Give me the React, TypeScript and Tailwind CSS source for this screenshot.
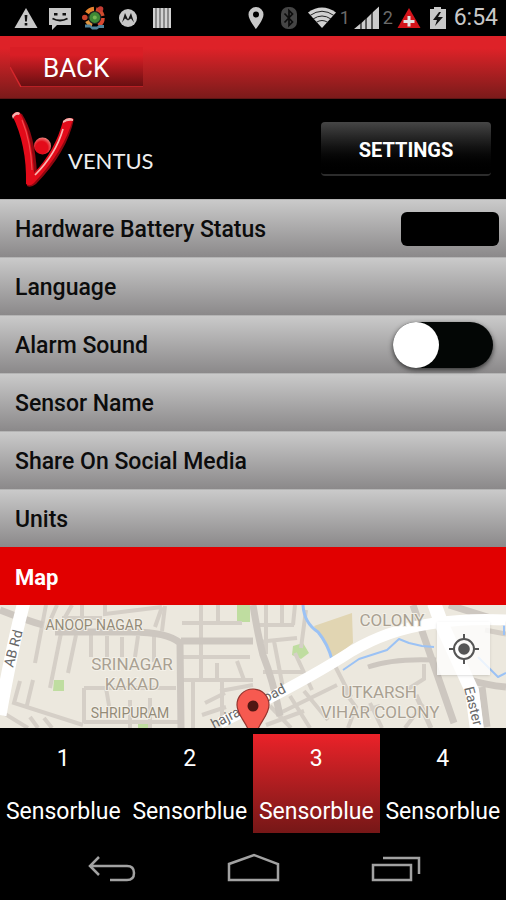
import React, { useState } from 'react';
import clsx from 'clsx';

const sensors = [
  { id: 1, name: 'Sensorblue' },
  { id: 2, name: 'Sensorblue' },
  { id: 3, name: 'Sensorblue' },
  { id: 4, name: 'Sensorblue' },
];

const rowClass =
  'flex h-[58px] w-full items-center justify-between border-t border-[#b4b4b4] bg-linear-to-b from-[#cacaca] to-[#8b898a] pr-[7px] pl-[15px] text-left text-[23px] font-medium text-[#0c0c0c]';

function StatusBar() {
  return (
    <div className="flex h-9 items-center justify-between bg-black pr-2 pl-[14px] text-[#c8c8c8]">
      <div className="flex items-center gap-[10px]">
        <svg className="h-6 w-6" viewBox="0 0 24 24">
          <path d="M12 2 23.5 22H.5Z" fill="#c8c8c8" />
          <path d="M10.600 9h2.800l-.5 6.500h-1.800zM10.700 17h2.600v2.600h-2.600z" fill="#111" />
        </svg>
        <svg className="h-6 w-6" viewBox="0 0 24 24">
          <path d="M1 2h22v17H9l-5 5v-5H1z" fill="#c8c8c8" />
          <path d="M6 7h3.500v2.500H6zM14.500 7H18v2.500h-3.500z" fill="#111" />
          <path d="M4.500 12.500q7.500 4 15 0" fill="none" stroke="#111" strokeWidth="1.800" />
        </svg>
        <svg className="h-6 w-6" viewBox="0 0 24 24">
          <path d="M5 7A9 9 0 0 1 12 3" fill="none" stroke="#e5822e" strokeWidth="4.500" />
          <path d="M14 3.500a9 9 0 0 1 6.500 6.500" fill="none" stroke="#cf4a2d" strokeWidth="4.500" />
          <path d="M20.500 12a9 9 0 0 1-4 7.500" fill="none" stroke="#d9472f" strokeWidth="4.500" />
          <path d="M5 15a9 9 0 0 0 5 4.500" fill="none" stroke="#df9640" strokeWidth="4" />
          <circle cx="2.800" cy="11.500" r="2.800" fill="#c8442c" />
          <circle cx="18.500" cy="3" r="2.800" fill="#c43c33" />
          <circle cx="12.800" cy="11.500" r="6" fill="#3f8a35" stroke="#222" strokeWidth="1.200" />
          <circle cx="12.800" cy="11.500" r="2" fill="#79b654" />
          <path d="M3 18.500h5l2 2h5l2-1.500h5v3h-5l-2 1.500h-5l-2-2H3z" fill="#52849b" />
        </svg>
        <svg className="h-6 w-6" viewBox="0 0 24 24">
          <circle cx="12" cy="12" r="9" fill="#c8c8c8" />
          <path d="M6 16.500 9 7l3 6.500L15 7l3 9.500-3-4-3 2-3-2z" fill="#161616" />
        </svg>
        <svg className="h-6 w-6" viewBox="0 0 24 24">
          <path d="M3 2h18v20H3z" fill="#a0a0a0" />
          <path d="M4 2v20M8 2v20M12 2v20M16 2v20M20 2v20" stroke="#d2d2d2" strokeWidth="2" />
          <path d="M6 2v20M10 2v20M14 2v20M18 2v20" stroke="#777" strokeWidth="1" />
        </svg>
      </div>

      <div className="flex items-center">
        <svg className="mr-4 h-6 w-4" viewBox="0 0 16 24">
          <path
            d="M8 1a7.500 7.500 0 0 1 7.500 7.500C15.500 14 8 23 8 23S.5 14 .5 8.500A7.500 7.500 0 0 1 8 1Zm0 4.500a3 3 0 1 0 0 6 3 3 0 0 0 0-6Z"
            fill="#c8c8c8"
            fillRule="evenodd"
          />
        </svg>
        <svg className="mr-[10px] h-6 w-[18px]" viewBox="0 0 18 24">
          <rect x="1" y="1" width="16" height="22" rx="7" fill="#454545" />
          <path d="m4.500 7.500 8 8.500L9 19.500v-15L12.500 8l-8 8.500" fill="none" stroke="#0c0c0c" strokeWidth="1.700" />
        </svg>
        <svg className="mr-1 h-6 w-7" viewBox="0 0 28 24">
          <path d="M0 6.500Q14-3.500 28 6.500L14 22Z" fill="#d0d0d0" />
          <path d="M2 9.500Q14 1 26 9.500M5 13q9-6 18 0M8 16.500q6-4 12 0" fill="none" stroke="#222" strokeWidth="1" />
        </svg>
        <span className="w-[14px] text-lg text-[#6a6a6a]">1</span>
        <svg className="mr-1 h-6 w-[25px]" viewBox="0 0 25 24">
          <path d="M0 23 6 18v5zM7.500 17l4-4v10h-4zM13 12l4-4v15h-4zM19 6l6-5.500V23h-6z" fill="#cbcbcb" />
          <path d="m6 18 1.500-1v6H6zM11.500 13l1.500-1v11h-1.500zM17 8l2-2v17h-2z" fill="#555" />
        </svg>
        <span className="w-[14px] text-lg text-[#6a6a6a]">2</span>
        <svg className="mr-2 h-6 w-6" viewBox="0 0 24 24">
          <path d="M12 2 23.500 22H.5Z" fill="#d3131a" />
          <path d="M10.500 10h3v4h4v3h-4v3.500h-3V17h-4v-3h4z" fill="#e2e2e2" />
        </svg>
        <svg className="mr-[7px] h-6 w-[18px]" viewBox="0 0 18 24">
          <path d="M5 1h7v2h5v20H1V3h4z" fill="#c8c8c8" />
          <path d="m10 6-6 8h4l-2 6 8-9H9l3-5z" fill="#111" />
        </svg>
        <span className="text-[23px] leading-9">6:54</span>
      </div>
    </div>
  );
}

function VentusLogo() {
  return (
    <div className="flex items-end">
      <svg className="h-[80px] w-[76px]" viewBox="0 0 76 80" role="img" aria-label="Ventus logo">
        <defs>
          <radialGradient id="ball" cx="45%" cy="60%" r="60%">
            <stop offset="60%" stopColor="#e30b1a" />
            <stop offset="100%" stopColor="#ef7d78" />
          </radialGradient>
        </defs>
        <path d="M13 7Q18 3 22 5q13 20 15 60 20-20 29-54 4-3 8-1Q67 43 36 75q-5 4-9 2Q29 35 13 7Z" fill="#8f0710" />
        <path d="M12 6q4-5 8-2 12 22 14 60 21-22 29-52 5-5 10-2-9 32-39 64-4 4-8 1 1-39-14-69Z" fill="#e30b1a" />
        <path d="M12 7q4-6 8-3l-1 2q-4-1-6 4zM63 12q5-5 10-2v2q-5-1-10 2z" fill="#f4b4b0" />
        <path d="M35 66q21-21 28-46" fill="none" stroke="#f8b6b1" strokeWidth="1.700" />
        <path d="M22 11q9 22 10 50" fill="none" stroke="#f04a4d" strokeWidth="1.200" />
        <circle cx="42.500" cy="37" r="8.500" fill="url(#ball)" />
      </svg>
      <span className="-ml-2 pb-3 font-['Lato'] text-[22px] leading-8 text-[#eeeeee]">VENTUS</span>
    </div>
  );
}

function SensorMap() {
  return (
    <div className="relative h-[123px] overflow-hidden bg-[#ece8de]">
      <svg className="h-full w-full" viewBox="0 0 506 123" preserveAspectRatio="xMidYMid slice" fontFamily="Roboto, sans-serif">
        <rect width="506" height="123" fill="#ece8de" />
        {/* parks */}
        <path d="M237 0h13v17h-13zM54 75h10v11H53zM138 115h11v8h-11z" fill="#bfdda0" />
        <path d="m293 41 10-3 6 10-8 6-9-4z" fill="#bfdda0" />
        <path d="m314 21 38-13 1 30-20 16z" fill="#e1d5b2" />
        {/* side streets */}
        <g fill="none" stroke="#d5cfc7" strokeWidth="4">
          <path d="M46 0 35 58M61 28 50 83M76 30l-8 38M91 30v22M107 31v21M122 32v20M138 31l-3 21M154 31v26M46 25 57 0M72 0l-8 14M82 0v17M62 13h40M105 0v9l57-7M162 2l-7 20" />
          <path d="M165 1 162 26M182 18h60M201 0v74M182 52h68M180 75h73M218 0v18M217 58v17M237 56l7 19M222 75v45M220 86l33-6" />
          <path d="M20 76 14 98l69 22M33 75l-6 25M30 112l8 11M44 113l8 10M0 106l28 17M84 83h92M84 83v35M106 83l4 23M130 95v28M150 93v30M84 117h94M193 76v47M205 98l20-10M202 110l24-8" />
          <path d="M254 20h40M266 0v49M282 0v20M295 0l-2 20M257 37l40-4M274 36l9 47M295 48l17 37M263 67h40M306 5l-5 38M333 57l18 35M270 101l21 22M290 91l20 32M304 86l24 29M282 107l55-27M266 120l38-14" />
          <path d="m344 86 12 16-8 21M360 107l20-6M370 98l12 25M405 123l18-24M424 59v15l-16 10" />
        </g>
        {/* main grey roads */}
        <g fill="none" stroke="#cdc7c0" strokeWidth="7">
          <path d="M0 5q25 10 43 15M55 27h70q42-1 55 11l1 85M181 36h72M253 0q5 31 10 50 10 25 17 61" />
          <path d="M470 75q15 5 36 7M482 82l5 40M449 0l57 18M413 0l41 118" />
          <path d="M368 62q25-9 68-7" strokeWidth="5" />
        </g>
        <path d="M416 90l15 33M485 25l21 4" fill="none" stroke="#d3cdc5" strokeWidth="5" />
        {/* streams */}
        <g fill="none" stroke="#9bc2f5" strokeWidth="3" strokeLinejoin="round">
          <path d="M303 0q1 18 15 27 10 12 14 28" />
          <path d="m343 65 16-11 28-9 12-11 10 4 13 3 12 1" strokeWidth="2" />
          <path d="m478 52 12 12 8 8 8-4M504 20v10" strokeWidth="2" />
        </g>
        {/* highways */}
        <g fill="none" stroke="#ffffff">
          <path d="M24-3Q12 42 0 110" strokeWidth="13" />
          <path d="M220 118Q306 76 352 46 388 25 429 19 465 13 506 15" strokeWidth="11" />
          <path d="m434-2 8 22 30 66 5 39" strokeWidth="14" />
        </g>
        {/* labels */}
        <g fill="#938b78" stroke="#f3f0e8" strokeWidth="2" paintOrder="stroke" fontSize="14">
          <text x="94" y="25" textAnchor="middle">ANOOP NAGAR</text>
          <text x="130" y="113" textAnchor="middle">SHRIPURAM</text>
        </g>
        <g fill="#a9a092" stroke="#f3f0e8" strokeWidth="2" paintOrder="stroke" fontSize="17" textAnchor="middle">
          <text x="132" y="65">SRINAGAR</text>
          <text x="132" y="85">KAKAD</text>
          <text x="392" y="21">COLONY</text>
          <text x="379" y="93">UTKARSH</text>
          <text x="380" y="113">VIHAR COLONY</text>
        </g>
        <g fill="#686868" fontSize="14">
          <text transform="translate(13 63) rotate(-75)">AB Rd</text>
          <text transform="translate(214 124) rotate(-27)">hajrana Road</text>
          <text transform="translate(464 83) rotate(76)">Easter</text>
        </g>
        <path d="M253 84c9 0 16 7 16 16 0 10-10 18-12 27h-8c-2-9-12-17-12-27 0-9 7-16 16-16Z" fill="#f65a50" stroke="#94342e" strokeWidth="1.200" />
        <circle cx="253" cy="101" r="5.500" fill="#501713" />
      </svg>
      <button
        aria-label="My location"
        className="absolute top-[17px] right-4 flex h-[53px] w-[53px] items-center justify-center bg-white/80 shadow-sm"
      >
        <svg className="h-8 w-8" viewBox="0 0 32 32">
          <circle cx="16" cy="16" r="10" fill="none" stroke="#555" strokeWidth="2" />
          <circle cx="16" cy="16" r="5.800" fill="#555" />
          <path d="M16 1v6M16 25v6M1 16h6M25 16h6" stroke="#555" strokeWidth="2" />
        </svg>
      </button>
    </div>
  );
}

export default function App() {
  const [alarmOn, setAlarmOn] = useState(false);
  const [activeSensor, setActiveSensor] = useState(3);

  return (
    <div className="min-h-screen bg-black font-['Roboto',sans-serif] text-white">
      <StatusBar />

      <header className="flex h-[62px] items-center bg-linear-to-b from-[#de2228] from-20% to-[#7b1a1a] px-[10px]">
        <button className="relative h-10 w-[133px] text-left">
          <svg className="absolute inset-0 h-full w-full" viewBox="0 0 133 40" preserveAspectRatio="none">
            <defs>
              <linearGradient id="backFill" x1="0" y1="0" x2="0" y2="1">
                <stop offset="20%" stopColor="#d91e25" />
                <stop offset="100%" stopColor="#650e11" />
              </linearGradient>
            </defs>
            <path d="M0 0H133V40H11L0 20Z" fill="url(#backFill)" />
            <path d="M0 20 11 40H133" fill="none" stroke="#d5272c" strokeWidth="1.500" />
          </svg>
          <span className="relative pl-[33px] text-[26px] leading-[42px]">BACK</span>
        </button>
      </header>

      <div className="flex h-[101px] items-center justify-between border-t border-[#5c1515] pr-[15px]">
        <VentusLogo />
        <button className="h-[54px] w-[170px] rounded-sm border-b-2 border-[#2c2c2c] bg-linear-to-b from-[#464646] via-[#111111] via-50% to-black pt-[3px] text-xl font-bold">
          SETTINGS
        </button>
      </div>

      <main>
        <div className={rowClass}>
          <span className="pt-[3px]">Hardware Battery Status</span>
          <div className="h-[34px] w-[98px] rounded-md bg-black" />
        </div>
        <button className={rowClass}>
          <span className="pt-[3px]">Language</span>
        </button>
        <label className={rowClass}>
          <span className="pt-[3px]">Alarm Sound</span>
          <input
            type="checkbox"
            className="peer sr-only"
            checked={alarmOn}
            onChange={(e) => setAlarmOn(e.target.checked)}
          />
          <span
            className={clsx(
              'mr-[6px] flex h-[46px] w-[100px] rounded-full bg-[#030605] shadow-[0_2px_5px_#333]',
              alarmOn && 'justify-end'
            )}
          >
            <span className="h-[46px] w-[46px] rounded-full bg-white" />
          </span>
        </label>
        <button className={rowClass}>
          <span className="pt-[3px]">Sensor Name</span>
        </button>
        <button className={rowClass}>
          <span className="pt-[3px]">Share On Social Media</span>
        </button>
        <button className={rowClass}>
          <span className="pt-[3px]">Units</span>
        </button>
        <button className="flex h-[58px] w-full items-center bg-[#e10000] pt-[3px] pl-[15px] text-[22px] font-bold">
          Map
        </button>
        <SensorMap />
      </main>

      <div className="grid grid-cols-4 pt-[6px]">
        {sensors.map((sensor) => (
          <button
            key={sensor.id}
            onClick={() => setActiveSensor(sensor.id)}
            className={clsx(
              'flex h-[99px] flex-col items-center justify-between pt-[9px] pb-[5px] text-[23px] leading-8',
              activeSensor === sensor.id && 'bg-linear-to-b from-[#eb2229] to-[#761717]'
            )}
          >
            <span>{sensor.id}</span>
            <span>{sensor.name}</span>
          </button>
        ))}
      </div>

      <nav className="flex h-[67px] items-center justify-center gap-[88px] pt-1">
        <button aria-label="Back">
          <svg className="h-8 w-[54px]" viewBox="0 0 54 32" fill="none" stroke="#a2a2a2" strokeWidth="2.500">
            <path d="M15 4 6 13l9 9M6 13h37q7 0 7 7t-7 7H26" />
          </svg>
        </button>
        <button aria-label="Home">
          <svg className="h-8 w-[54px]" viewBox="0 0 54 32" fill="none" stroke="#a2a2a2" strokeWidth="2.500">
            <path d="M3 27V11L28 2l24 9v16Z" />
          </svg>
        </button>
        <button aria-label="Recent apps">
          <svg className="h-8 w-[54px]" viewBox="0 0 54 32" fill="none" stroke="#a2a2a2" strokeWidth="2.500">
            <path d="M5 12h38v15H5zM15 5h36v16" />
          </svg>
        </button>
      </nav>
    </div>
  );
}
